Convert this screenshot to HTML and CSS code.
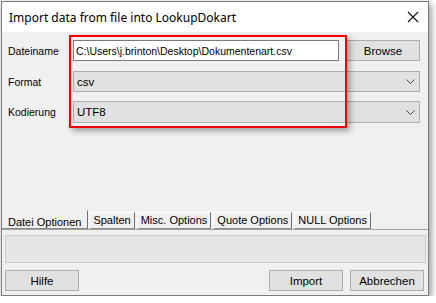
FILE: index.html
```html
<!DOCTYPE html>
<html lang="de">
<head>
    <meta charset="UTF-8">
    <title>Import data from file into LookupDokart</title>
    <link rel="stylesheet" href="styles.css">
</head>
<body>
    <div class="window">
        <div class="titlebar">
            <span class="title">Import data from file into LookupDokart</span>
            <svg class="close" width="12" height="12" viewBox="0 0 12 12">
                <path d="M1 1 L11 11 M11 1 L1 11" stroke="#111" stroke-width="1.1" fill="none"/>
            </svg>
        </div>

        <div class="client">
            <div class="form">
                <label>Dateiname</label>
                <input class="path" type="text" value="C:\Users\j.brinton\Desktop\Dokumentenart.csv">
                <button class="btn">Browse</button>

                <label>Format</label>
                <div class="combo wide">
                    <span>csv</span>
                    <svg width="9" height="5" viewBox="0 0 9 5"><path d="M0.5 0.5 L4.5 4.5 L8.5 0.5" stroke="#444" fill="none"/></svg>
                </div>

                <label class="last">Kodierung</label>
                <div class="combo wide last">
                    <span>UTF8</span>
                    <svg width="9" height="5" viewBox="0 0 9 5"><path d="M0.5 0.5 L4.5 4.5 L8.5 0.5" stroke="#444" fill="none"/></svg>
                </div>
            </div>

            <div class="spacer"></div>

            <div class="tabs">
                <div class="tab active">Datei Optionen</div>
                <div class="tab">Spalten</div>
                <div class="tab">Misc. Options</div>
                <div class="tab">Quote Options</div>
                <div class="tab">NULL Options</div>
            </div>
            <div class="panel"></div>

            <div class="buttons">
                <button class="btn">Hilfe</button>
                <div class="spacer"></div>
                <button class="btn">Import</button>
                <button class="btn">Abbrechen</button>
            </div>
        </div>

        <div class="highlight"></div>
    </div>
</body>
</html>
```

FILE: styles.css
```css
body {
    margin: 0;
    background: #ffffff;
    font-family: "Liberation Sans", Arial, sans-serif;
    font-size: 11px;
    color: #000;
}

.window {
    position: relative;
    margin: 1px 0 0 1px;
    width: 426px;
    height: 293px;
    border: 1px solid #7c7c7c;
    background: #f0f0f0;
    box-shadow: 2px 3px 7px rgba(0, 0, 0, 0.45);
    display: flex;
    flex-direction: column;
}

.titlebar {
    height: 30px;
    background: #ffffff;
    display: flex;
    align-items: center;
    justify-content: space-between;
    padding: 0 9px 0 7px;
}

.title {
    font-family: "Noto Sans", sans-serif;
    font-size: 12px;
    color: #000;
}

.client {
    flex: 1;
    display: flex;
    flex-direction: column;
}

.form {
    display: grid;
    grid-template-columns: 58px 1fr 74px;
    grid-template-rows: 21px 21px 21px;
    column-gap: 7px;
    row-gap: 10px;
    padding: 8px 8px 0 6px;
    font-size: 11.5px;
}

.form label {
    align-self: center;
    font-size: 10.5px;
}

.form .last {
    margin-top: -1px;
}

.path {
    font-family: inherit;
    font-size: 10.5px;
    height: 21px;
    box-sizing: border-box;
    border: 1px solid #7a7a7a;
    background: #fff;
    padding: 0 2px;
    margin: 0;
    outline: none;
}

.btn {
    font-family: inherit;
    font-size: 11.5px;
    height: 21px;
    width: 74px;
    box-sizing: border-box;
    border: 1px solid #adadad;
    background: #e1e1e1;
    color: #000;
    padding: 0;
    margin: 0;
}

.combo {
    display: flex;
    align-items: center;
    justify-content: space-between;
    box-sizing: border-box;
    border: 1px solid #adadad;
    background: #e1e1e1;
    padding: 0 4px 0 3px;
}

.wide {
    grid-column: 2 / 4;
}

.spacer {
    flex: 1;
}

.tabs {
    display: flex;
    align-items: flex-end;
    height: 19px;
    border-bottom: 1px solid #a0a0a0;
}

.tab {
    height: 17px;
    box-sizing: border-box;
    border-top: 1px solid #fff;
    border-left: 1px solid #fff;
    border-right: 1px solid #6e6e6e;
    border-bottom: 1px solid #8a8a8a;
    padding: 0 3px;
    line-height: 14px;
    margin-right: 2px;
}

.tab.active {
    height: 19px;
    border-top-color: transparent;
    border-left: none;
    padding: 4px 6px 0 6px;
    margin-right: 1px;
}

.panel {
    height: 28px;
    box-sizing: border-box;
    margin: 5px 2px 0 3px;
    background: #e6e6e6;
    border: 1px solid #cacaca;
}

.buttons {
    display: flex;
    gap: 7px;
    padding: 7px 4px 4px 3px;
}

.highlight {
    position: absolute;
    left: 67px;
    top: 33px;
    width: 278px;
    height: 93px;
    box-sizing: border-box;
    border: 2px solid #ee0000;
    box-shadow: 3px 3px 6px rgba(0, 0, 0, 0.35);
}
```
